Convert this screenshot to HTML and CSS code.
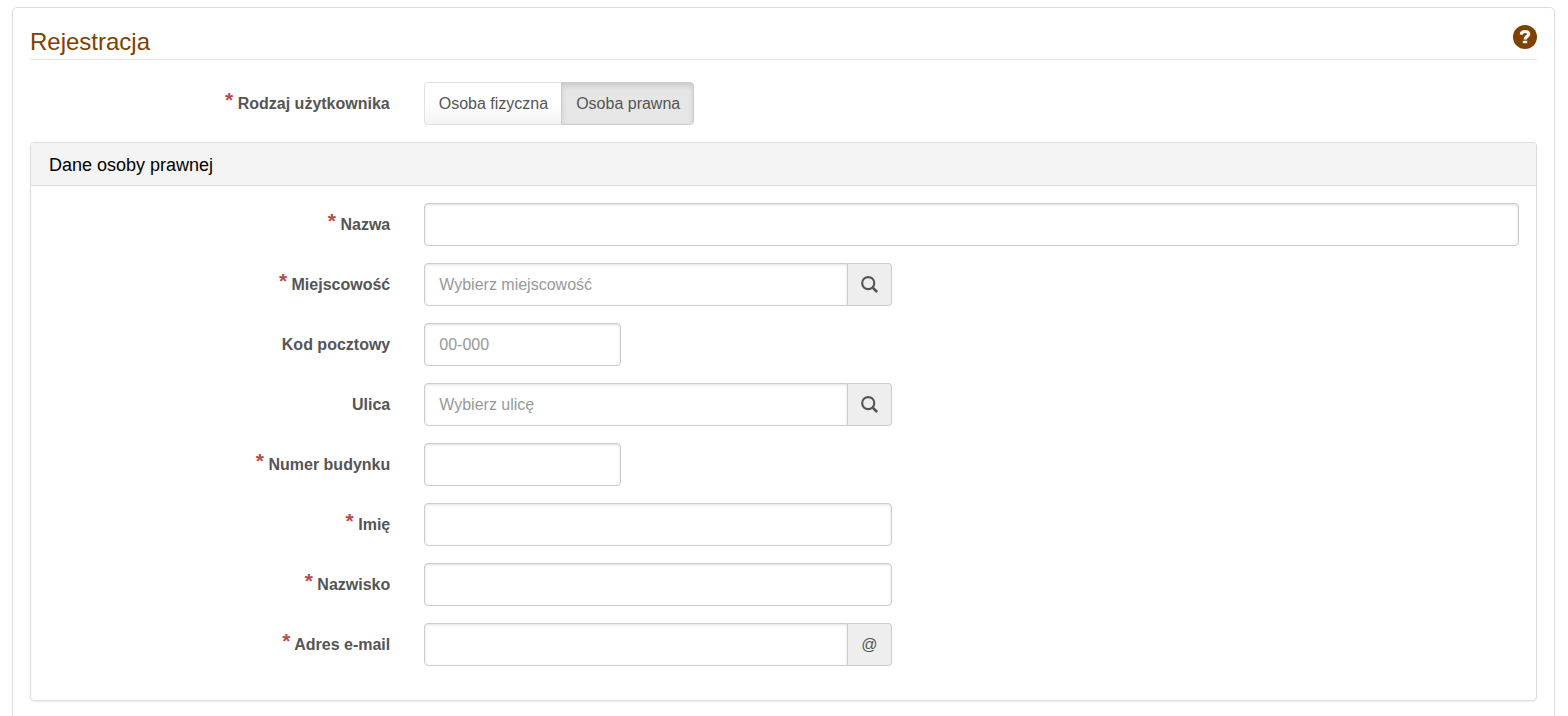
FILE: index.html
```html
<!DOCTYPE html>
<html lang="pl">
<head>
<meta charset="utf-8">
<meta name="viewport" content="width=device-width, initial-scale=1">
<title>Rejestracja</title>
<link rel="stylesheet" href="styles.css">
</head>
<body>
<svg class="sprite" aria-hidden="true">
  <symbol id="search" viewBox="0 0 16 16">
    <circle cx="6.8" cy="6.7" r="5.7" fill="none" stroke="currentColor" stroke-width="2"/>
    <path d="M10.8 10.7L15.2 15.1" fill="none" stroke="currentColor" stroke-width="2.6"/>
  </symbol>
</svg>
<main class="page">
  <header class="page-header">
    <h1 class="page-title">Rejestracja</h1>
    <a class="help" href="#pomoc" aria-label="Pomoc">
      <svg class="help-icon" viewBox="0 0 24 24" aria-hidden="true">
        <circle cx="12" cy="12" r="12" fill="#804000"/>
        <path d="M8.3 9.6C8.4 7.4 9.7 6.5 12 6.5s3.7 1 3.7 2.7c0 2.3-3.6 2.2-3.6 5.2" fill="none" stroke="#fff" stroke-width="3.2"/>
        <path d="M9.8 15.8h4.4v2.4h-4.4z" fill="#fff"/>
      </svg>
    </a>
  </header>
  <form>
    <div class="row">
      <div class="label" id="rodzaj"><span class="required">*</span> Rodzaj użytkownika</div>
      <div class="field">
        <div class="toggle" role="group" aria-labelledby="rodzaj">
          <button class="toggle-button" type="button" aria-pressed="false">Osoba fizyczna</button>
          <button class="toggle-button active" type="button" aria-pressed="true">Osoba prawna</button>
        </div>
      </div>
    </div>
    <section class="panel">
      <h2 class="panel-title">Dane osoby prawnej</h2>
      <div class="panel-body">
        <div class="row">
          <label class="label" for="nazwa"><span class="required">*</span> Nazwa</label>
          <div class="field"><input class="input" id="nazwa" type="text"></div>
        </div>
        <div class="row">
          <label class="label" for="miejscowosc"><span class="required">*</span> Miejscowość</label>
          <div class="field half">
            <input class="input joined" id="miejscowosc" type="text" placeholder="Wybierz miejscowość">
            <button class="addon" type="button" aria-label="Szukaj miejscowości"><svg class="search-icon"><use href="#search"/></svg></button>
          </div>
        </div>
        <div class="row">
          <label class="label" for="kod">Kod pocztowy</label>
          <div class="field"><input class="input short" id="kod" type="text" placeholder="00-000"></div>
        </div>
        <div class="row">
          <label class="label" for="ulica">Ulica</label>
          <div class="field half">
            <input class="input joined" id="ulica" type="text" placeholder="Wybierz ulicę">
            <button class="addon" type="button" aria-label="Szukaj ulicy"><svg class="search-icon"><use href="#search"/></svg></button>
          </div>
        </div>
        <div class="row">
          <label class="label" for="numer"><span class="required">*</span> Numer budynku</label>
          <div class="field"><input class="input short" id="numer" type="text"></div>
        </div>
        <div class="row">
          <label class="label" for="imie"><span class="required">*</span> Imię</label>
          <div class="field half"><input class="input" id="imie" type="text"></div>
        </div>
        <div class="row">
          <label class="label" for="nazwisko"><span class="required">*</span> Nazwisko</label>
          <div class="field half"><input class="input" id="nazwisko" type="text"></div>
        </div>
        <div class="row">
          <label class="label" for="email"><span class="required">*</span> Adres e-mail</label>
          <div class="field half">
            <input class="input joined" id="email" type="email">
            <span class="addon">@</span>
          </div>
        </div>
      </div>
    </section>
  </form>
</main>
</body>
</html>
```
FILE: styles.css
```css
* {
  box-sizing: border-box;
}

body {
  margin: 0;
  padding: 7px 13px 24px 12px;
  background: #fff;
  color: #555;
  font: 16px/23px "Liberation Sans", Arial, sans-serif;
}

.sprite {
  display: none;
}

.page {
  padding: 17px 17px 24px;
  border: 1px solid #ddd;
  border-radius: 5px;
}

.page-header {
  display: flex;
  justify-content: space-between;
  align-items: flex-start;
  margin-bottom: 22px;
  border-bottom: 1px solid #e5e5e5;
}

.page-title {
  margin: 0;
  padding: 2px 0;
  color: #804000;
  font-size: 24px;
  font-weight: 400;
  line-height: 30px;
}

.help {
  display: block;
}

.help-icon {
  display: block;
  width: 24px;
  height: 24px;
}

.row {
  display: flex;
  margin-bottom: 17px;
}

.label {
  flex: none;
  width: 25%;
  padding: 10px 17px 0;
  font-weight: 700;
  text-align: right;
}

.required {
  color: #b94a48;
  font-size: 21px;
  line-height: 16px;
  vertical-align: 2px;
}

.field {
  display: flex;
  width: 75%;
  padding: 0 17px;
}

.half {
  width: 33.3333%;
}

.input {
  flex: 1;
  min-width: 0;
  height: 43px;
  padding: 8px 14px;
  border: 1px solid #ccc;
  border-radius: 4px;
  background: #fff;
  box-shadow: inset 0 1px 3px rgba(0, 0, 0, 0.12);
  color: #555;
  font: inherit;
}

.input::placeholder {
  color: #999;
  opacity: 1;
}

.short {
  flex: none;
  width: 197px;
}

.joined {
  border-radius: 4px 0 0 4px;
}

.addon {
  display: flex;
  flex: none;
  align-items: center;
  justify-content: center;
  width: 44px;
  height: 43px;
  padding: 0;
  border: 1px solid #ccc;
  border-left: 0;
  border-radius: 0 4px 4px 0;
  background: #eee;
  color: #555;
  font: inherit;
}

.search-icon {
  width: 17px;
  height: 17px;
}

.toggle {
  display: flex;
}

.toggle-button {
  height: 43px;
  padding: 0 13px 0 14px;
  border: 1px solid #e2e2e2;
  border-right: 0;
  border-radius: 4px 0 0 4px;
  background: linear-gradient(#fff 50%, #f4f4f4);
  color: #555;
  font: inherit;
}

.active {
  border: 1px solid #ccc;
  border-radius: 0 4px 4px 0;
  background: #e6e6e6;
  box-shadow: inset 0 3px 5px rgba(0, 0, 0, 0.12);
}

.panel {
  border: 1px solid #ddd;
  border-radius: 4px;
  box-shadow: 0 1px 2px rgba(0, 0, 0, 0.08);
}

.panel-title {
  margin: 0;
  padding: 11px 18px 9px;
  border-bottom: 1px solid #ddd;
  border-radius: 3px 3px 0 0;
  background: #f4f4f4;
  color: #000;
  font-size: 18px;
  font-weight: 400;
  line-height: 22px;
}

.panel-body {
  padding: 17px 0;
}
```
